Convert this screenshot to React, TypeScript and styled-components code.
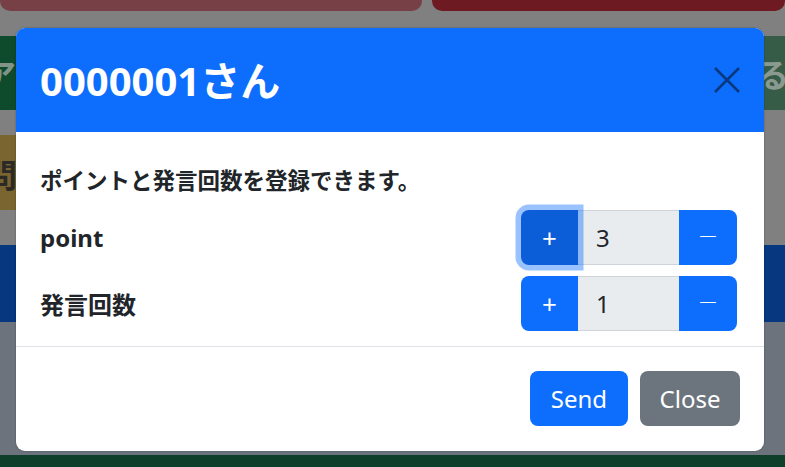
import React from "react";
import styled, { createGlobalStyle } from "styled-components";

const Global = createGlobalStyle`
  html, body { margin: 0; padding: 0; }
  body {
    width: 785px;
    height: 467px;
    overflow: hidden;
    font-family: "Noto Sans", "Noto Sans CJK JP", sans-serif;
  }
  * { box-sizing: border-box; }
`;

const Page = styled.div`
  position: relative;
  width: 785px;
  height: 467px;
  background: #808080;
  display: flex;
  flex-direction: column;
  overflow: hidden;
`;

const TopRow = styled.div`
  display: flex;
  gap: 10px;
  height: 11px;
  flex: 0 0 auto;
`;

const TopButton = styled.div<{ $bg: string; $w?: number }>`
  flex: ${(p) => (p.$w ? `0 0 ${p.$w}px` : "1 1 auto")};
  background: ${(p) => p.$bg};
  border-radius: 0 0 10px 10px;
`;

const Band = styled.div<{ $h: number; $mt?: number; $bg?: string }>`
  height: ${(p) => p.$h}px;
  margin-top: ${(p) => p.$mt ?? 0}px;
  background: ${(p) => p.$bg ?? "transparent"};
  flex: 0 0 auto;
  display: flex;
  gap: 10px;
  overflow: hidden;
`;

const BgButton = styled.div<{ $bg: string; $w?: number; $color: string; $align: string; $shift: number }>`
  flex: ${(p) => (p.$w ? `0 0 ${p.$w}px` : "1 1 auto")};
  background: ${(p) => p.$bg};
  color: ${(p) => p.$color};
  display: flex;
  align-items: center;
  justify-content: ${(p) => p.$align};
  font-size: 32px;
  font-weight: 700;
  white-space: nowrap;
  overflow: hidden;
  & > span {
    margin-left: ${(p) => (p.$align === "flex-start" ? p.$shift : 0)}px;
    margin-right: ${(p) => (p.$align === "flex-end" ? p.$shift : 0)}px;
  }
`;

const Fill = styled.div<{ $bg: string }>`
  flex: 1 1 auto;
  background: ${(p) => p.$bg};
`;

const Overlay = styled.div`
  position: absolute;
  inset: 0;
  padding: 28px 0 0 16px;
`;

const Modal = styled.div`
  width: 748px;
  background: #fff;
  border-radius: 9px;
  overflow: hidden;
  box-shadow: 0 0 2px rgba(0, 0, 0, 0.35);
  display: flex;
  flex-direction: column;
`;

const Header = styled.div`
  height: 104px;
  background: #0d6efd;
  display: flex;
  align-items: center;
  justify-content: space-between;
  padding: 0 24px;
`;

const Title = styled.h1`
  margin: 0;
  color: #fff;
  font-size: 40px;
  font-weight: 700;
  line-height: 1.2;
  padding-top: 2px;
  white-space: nowrap;
`;

const CloseX = styled.button`
  width: 26px;
  height: 26px;
  padding: 0;
  border: 0;
  background: transparent;
  display: flex;
  align-items: center;
  justify-content: center;
  cursor: pointer;
`;

const Body = styled.div`
  padding: 33px 27px 15px 24px;
  display: flex;
  flex-direction: column;
`;

const Lead = styled.p`
  margin: 0 0 13px 0;
  font-size: 22.5px;
  font-weight: 700;
  line-height: 32px;
  color: #212529;
  white-space: nowrap;
`;

const Rows = styled.div`
  display: flex;
  flex-direction: column;
  gap: 11px;
`;

const Row = styled.div`
  display: flex;
  align-items: center;
  justify-content: space-between;
`;

const Label = styled.label`
  font-size: 24px;
  font-weight: 700;
  color: #212529;
`;

const Group = styled.div`
  display: flex;
  width: 216px;
  height: 55px;
`;

const StepButton = styled.button<{ $side: "left" | "right"; $focused?: boolean }>`
  position: relative;
  width: ${(p) => (p.$side === "left" ? 57 : 58)}px;
  height: 55px;
  border: 0;
  margin: 0;
  padding: 0;
  background: ${(p) => (p.$focused ? "#0b5ed7" : "#0d6efd")};
  color: #fff;
  font-family: "Noto Sans", "Noto Sans CJK JP", sans-serif;
  font-size: 26px;
  line-height: 1;
  display: flex;
  align-items: center;
  justify-content: center;
  border-radius: ${(p) => (p.$side === "left" ? "8px 0 0 8px" : "0 8px 8px 0")};
  z-index: ${(p) => (p.$focused ? 5 : 1)};
  box-shadow: ${(p) => (p.$focused ? "0 0 0 5.5px rgba(13,110,253,0.42)" : "none")};
`;

const Dash = styled.span`
  font-size: 20px;
  font-weight: 300;
`;

const Value = styled.div`
  width: 101px;
  height: 55px;
  background: #e9ecef;
  border-top: 1px solid #ced4da;
  border-bottom: 1px solid #ced4da;
  display: flex;
  align-items: center;
  padding-left: 18px;
  font-size: 24px;
  color: #212529;
`;

const Footer = styled.div`
  border-top: 1px solid #dee2e6;
  padding: 24px 24px 25px;
  display: flex;
  justify-content: flex-end;
  gap: 12px;
`;

const FooterButton = styled.button<{ $variant: "primary" | "secondary" }>`
  height: 55px;
  padding: 0 ${(p) => (p.$variant === "primary" ? 21 : 19.5)}px;
  border: 0;
  border-radius: 8px;
  background: ${(p) => (p.$variant === "primary" ? "#0d6efd" : "#6c757d")};
  color: #fff;
  font-family: "Noto Sans", "Noto Sans CJK JP", sans-serif;
  font-size: 24px;
  cursor: pointer;
`;

function Stepper({ value, focused }: { value: number; focused?: boolean }) {
  return (
    <Group>
      <StepButton $side="left" $focused={focused}>+</StepButton>
      <Value>{value}</Value>
      <StepButton $side="right">
        <Dash>ー</Dash>
      </StepButton>
    </Group>
  );
}

export default function App() {
  return (
    <>
      <Global />
      <Page>
        <TopRow>
          <TopButton $bg="#774046" $w={422} />
          <TopButton $bg="#6d1a22" />
        </TopRow>
        <Band $h={74} $mt={25}>
          <BgButton $bg="#0e4a2c" $w={520} $color="#7f9386" $align="flex-start" $shift={-16}>
            <span>アクション</span>
          </BgButton>
          <BgButton $bg="#365c48" $color="#8a9a90" $align="flex-end" $shift={-4}>
            <span>登録する</span>
          </BgButton>
        </Band>
        <Band $h={75} $mt={25}>
          <BgButton $bg="#7a6530" $w={380} $color="#2b2a26" $align="flex-start" $shift={-15}>
            <span>問題</span>
          </BgButton>
        </Band>
        <Band $h={77} $mt={35} $bg="#06377f" />
        <Band $h={133} $bg="#6c737d" />
        <Fill $bg="#0e3f2a" />
        <Overlay>
          <Modal>
            <Header>
              <Title>0000001さん</Title>
              <CloseX aria-label="Close">
                <svg width="26" height="26" viewBox="0 0 26 26">
                  <path d="M1 1 L25 25 M25 1 L1 25" stroke="#08387f" strokeWidth="2.6" fill="none" />
                </svg>
              </CloseX>
            </Header>
            <Body>
              <Lead>ポイントと発言回数を登録できます。</Lead>
              <Rows>
                <Row>
                  <Label>point</Label>
                  <Stepper value={3} focused />
                </Row>
                <Row>
                  <Label>発言回数</Label>
                  <Stepper value={1} />
                </Row>
              </Rows>
            </Body>
            <Footer>
              <FooterButton $variant="primary">Send</FooterButton>
              <FooterButton $variant="secondary">Close</FooterButton>
            </Footer>
          </Modal>
        </Overlay>
      </Page>
    </>
  );
}
